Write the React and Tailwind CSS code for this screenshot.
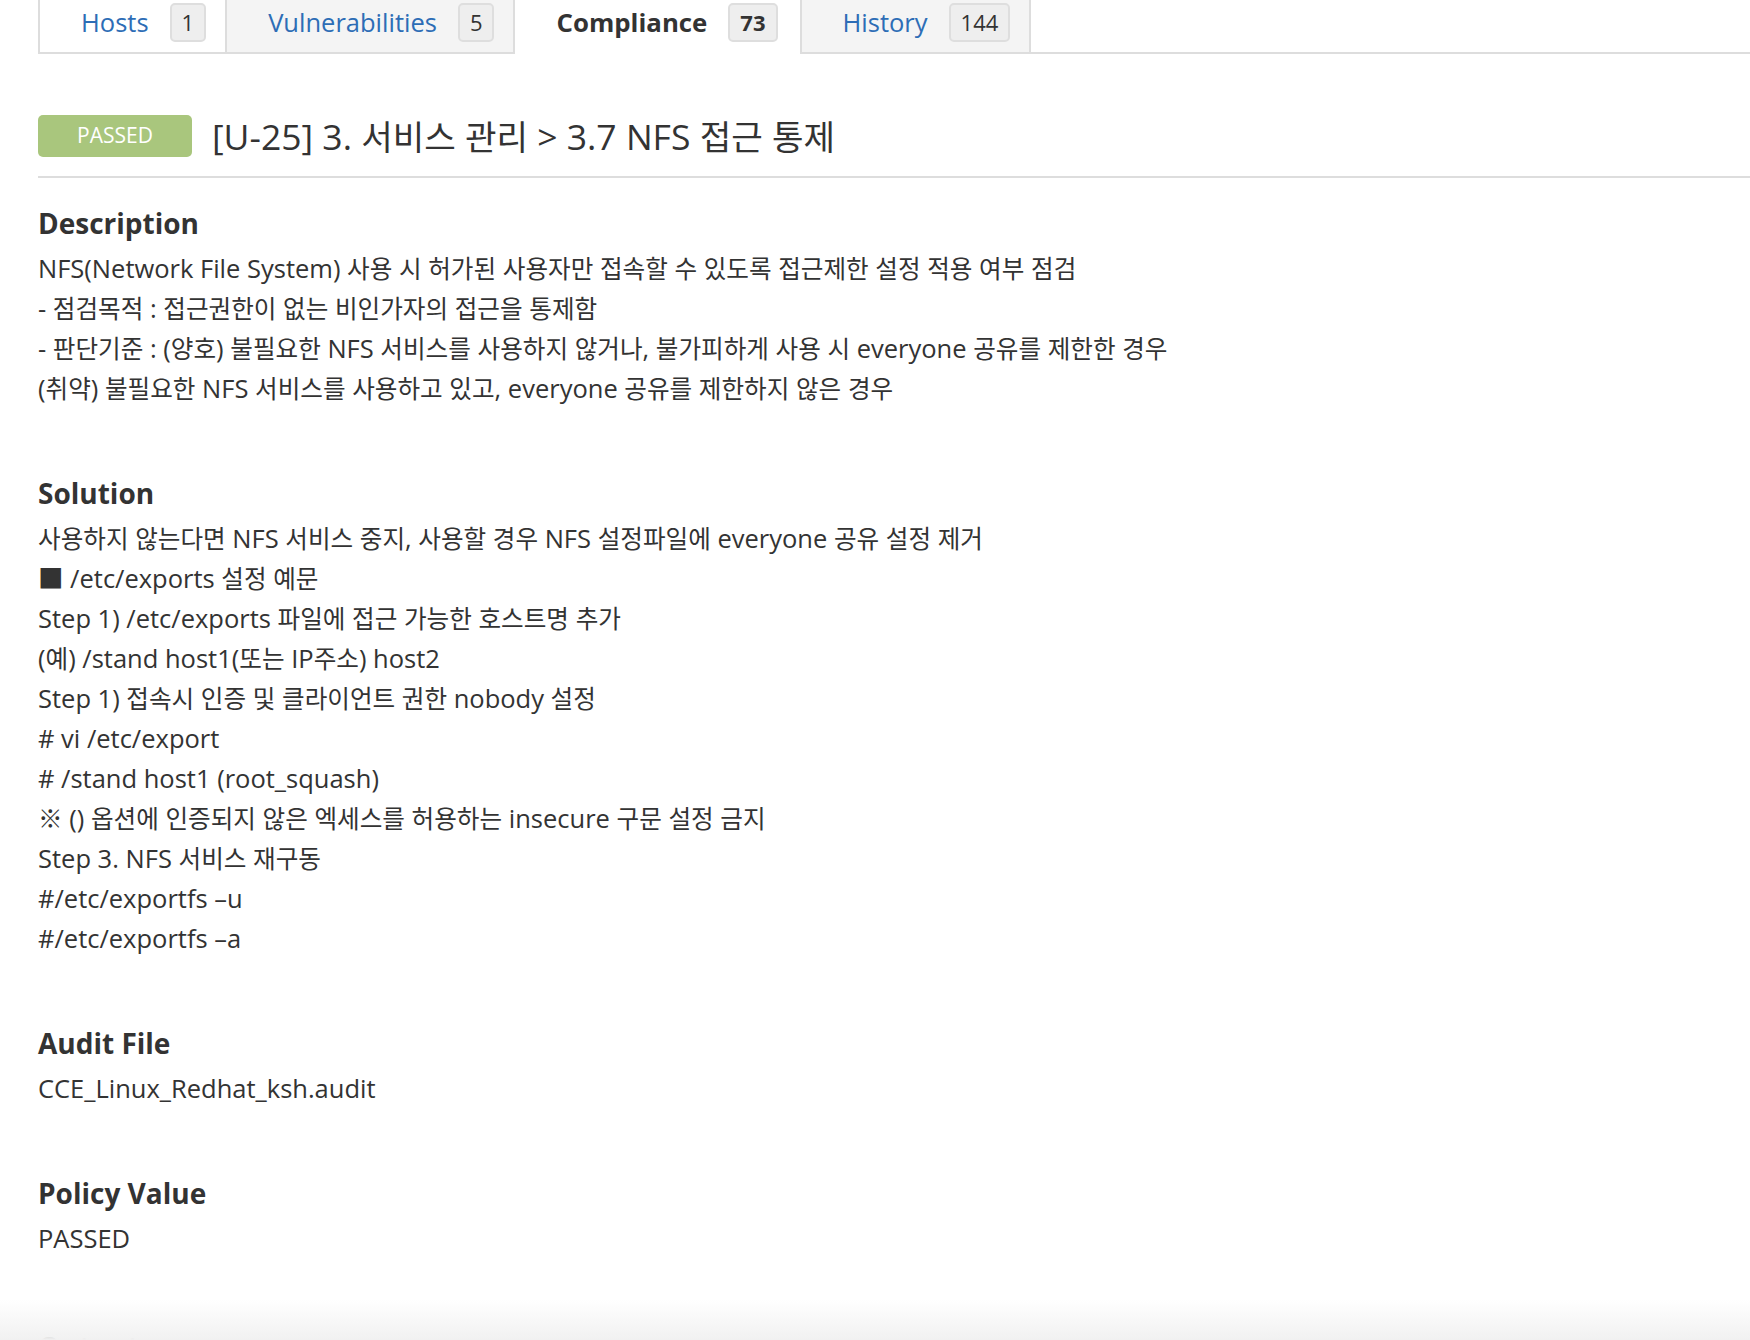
import React from "react";

function K({ children }) {
  const parts = String(children).split(/([\uAC00-\uD7A3\u3131-\u318E\u203B]+)/);
  return (
    <>
      {parts.map((p, i) =>
        i % 2 === 1 ? (
          <span key={i} className="text-[0.965em] leading-none">
            {p}
          </span>
        ) : (
          <React.Fragment key={i}>{p}</React.Fragment>
        )
      )}
    </>
  );
}

function Tab({ label, count, active, className }) {
  return (
    <div
      className={
        "flex items-start pt-[3px] pl-[41px] gap-[21px] " +
        (active ? "bg-white h-[54px] -mb-[2px] pr-[22px]" : "h-[52px] pr-[19px]") +
        " " +
        className
      }
    >
      <span
        className={
          "leading-[39px] " +
          (active ? "text-[25.8px] font-bold text-[#333333]" : "text-[25.5px] text-[#2d6db6]")
        }
      >
        {label}
      </span>
      <span
        className={
          "h-[39px] px-[10px] flex items-center rounded-[5px] border-2 border-[#dedede] bg-[#eeeeee] text-[22px] text-[#333333] " +
          (active ? "font-bold" : "")
        }
      >
        {count}
      </span>
    </div>
  );
}

function Section({ title, lines }) {
  return (
    <div className="mb-[65px]">
      <h3 className="text-[28px] font-bold leading-[40px] h-[40px] text-[#333333] mb-[5px]">{title}</h3>
      <div className="text-[25.5px] leading-[40px] text-[#333333]">
        {lines.map((l, i) => (
          <div key={i} className="whitespace-pre h-[40px]">
            <K>{l}</K>
          </div>
        ))}
      </div>
    </div>
  );
}

export default function App() {
  return (
    <div className="relative h-[1340px] overflow-hidden bg-white font-['Open_Sans','Noto_Sans_CJK_KR',sans-serif] text-[#333333]">
      <div className="pl-[38px]">
        {/* Tabs */}
        <div className="flex items-start border-b-2 border-[#dddddd] h-[54px]">
          <Tab label="Hosts" count="1" className="bg-white border-l-2 border-r-2 border-[#dddddd]" />
          <Tab label="Vulnerabilities" count="5" className="bg-[#f4f4f4] border-r-2 border-[#dddddd]" />
          <Tab label="Compliance" count="73" active className="" />
          <Tab label="History" count="144" className="bg-[#f4f4f4] border-l-2 border-r-2 border-[#dddddd]" />
        </div>

        {/* Title */}
        <div className="flex items-center gap-[20px] mt-[61px] h-[42px]">
          <div className="w-[154px] h-[42px] rounded-[5px] bg-[#a9c67d] flex items-center justify-center text-white text-[21px]">
            PASSED
          </div>
          <div className="text-[35.5px] leading-[42px] text-[#333333] whitespace-pre">
            <K>[U-25] 3. 서비스 관리 &gt; 3.7 NFS 접근 통제</K>
          </div>
        </div>
        <div className="mt-[19px] border-b-2 border-[#dddddd]" />

        <div className="pt-[25px]">
          <Section
            title="Description"
            lines={[
              "NFS(Network File System) 사용 시 허가된 사용자만 접속할 수 있도록 접근제한 설정 적용 여부 점검",
              "- 점검목적 : 접근권한이 없는 비인가자의 접근을 통제함",
              "- 판단기준 : (양호) 불필요한 NFS 서비스를 사용하지 않거나, 불가피하게 사용 시 everyone 공유를 제한한 경우",
              "(취약) 불필요한 NFS 서비스를 사용하고 있고, everyone 공유를 제한하지 않은 경우",
            ]}
          />
          <Section
            title="Solution"
            lines={[
              "사용하지 않는다면 NFS 서비스 중지, 사용할 경우 NFS 설정파일에 everyone 공유 설정 제거",
              "■ /etc/exports 설정 예문",
              "Step 1) /etc/exports 파일에 접근 가능한 호스트명 추가",
              "(예) /stand host1(또는 IP주소) host2",
              "Step 1) 접속시 인증 및 클라이언트 권한 nobody 설정",
              "# vi /etc/export",
              "# /stand host1 (root_squash)",
              "※ () 옵션에 인증되지 않은 엑세스를 허용하는 insecure 구문 설정 금지",
              "Step 3. NFS 서비스 재구동",
              "#/etc/exportfs –u",
              "#/etc/exportfs –a",
            ]}
          />
          <Section title="Audit File" lines={["CCE_Linux_Redhat_ksh.audit"]} />
          <Section title="Policy Value" lines={["PASSED"]} />
          <div className="pt-[4px]">
            <Section title="Output" lines={[""]} />
          </div>
        </div>
      </div>
      <div className="absolute inset-x-0 bottom-0 h-[40px] bg-gradient-to-b from-white/0 to-[#f1f1f1]" />
    </div>
  );
}
